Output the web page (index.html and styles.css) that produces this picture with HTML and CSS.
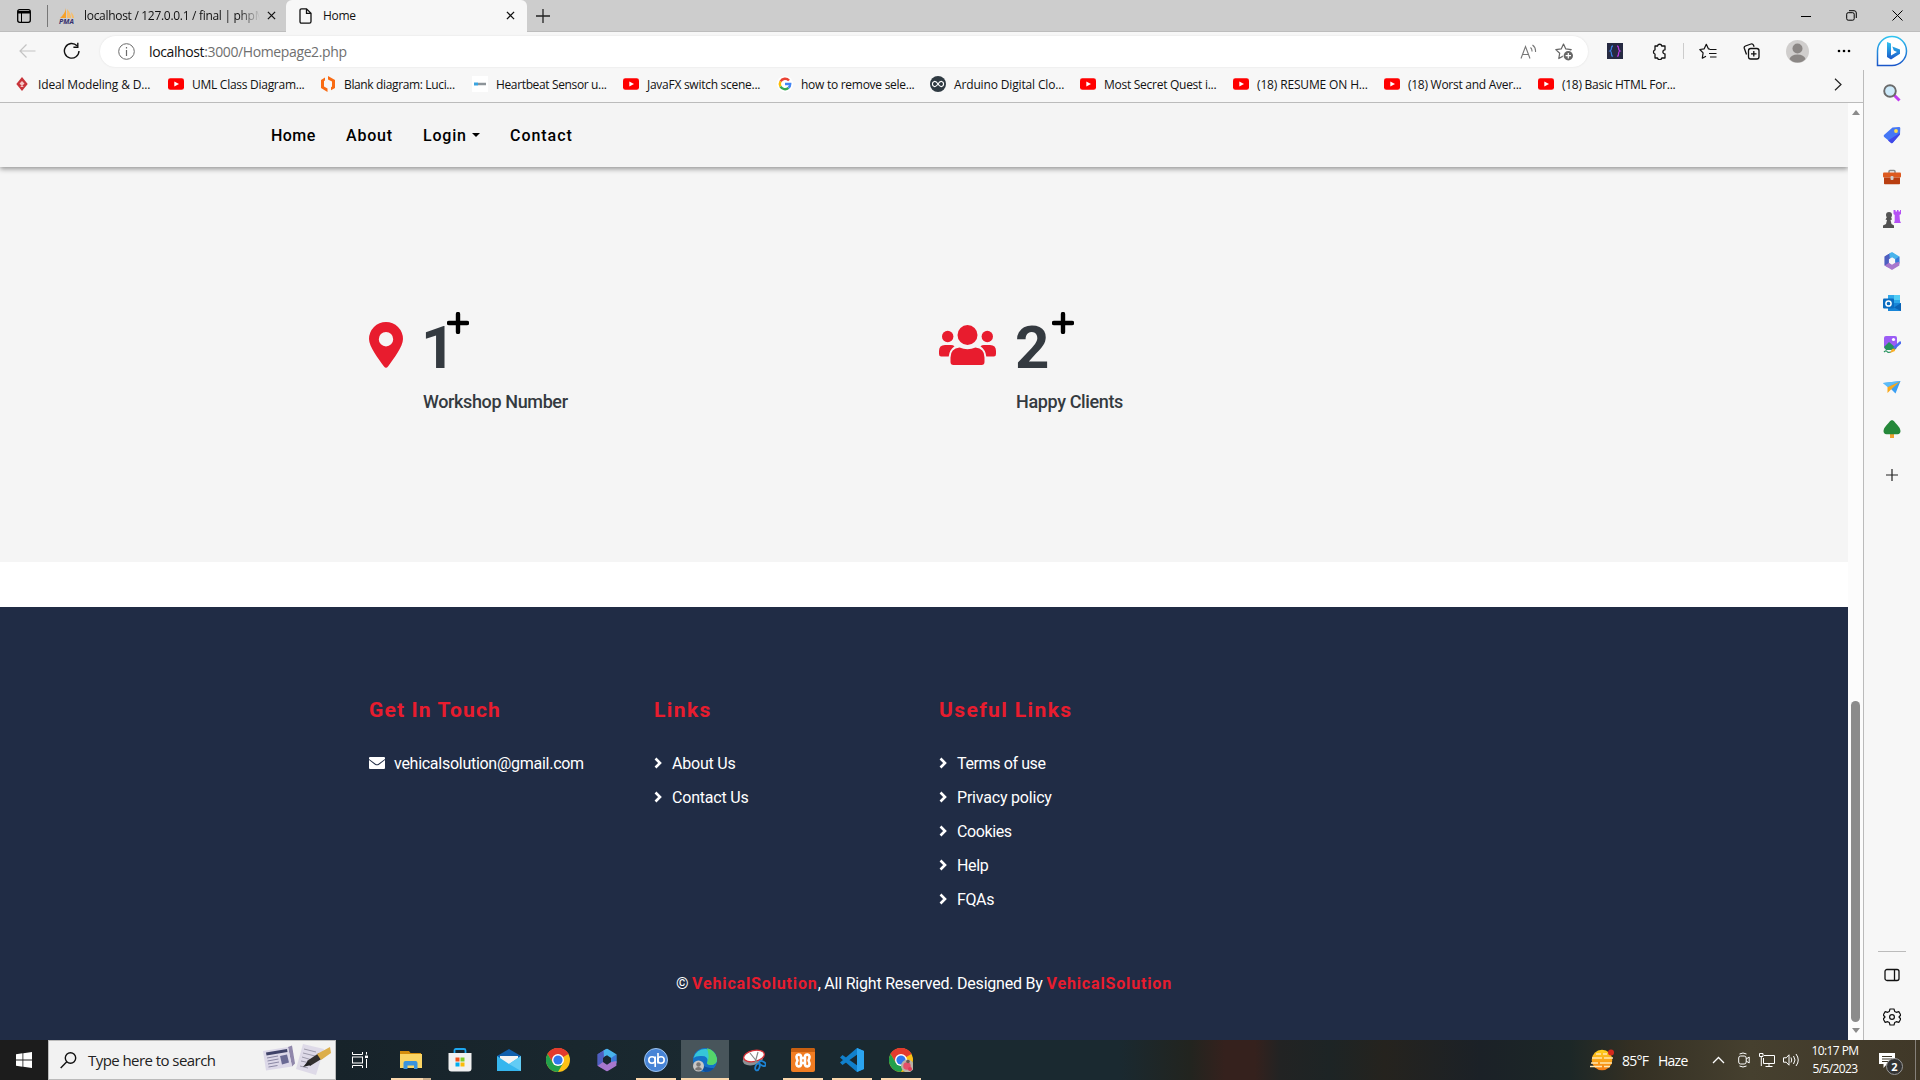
FILE: index.html
```html
<!DOCTYPE html>
<html lang="en">
<head>
<meta charset="utf-8">
<title>Home</title>
<link rel="stylesheet" href="styles.css">
</head>
<body>
<svg class="defs" width="0" height="0">
  <defs>
    <symbol id="yt" viewBox="0 0 16 16"><rect y="2.2" width="16" height="11.6" rx="2.4" fill="#f00"/><path d="M6.3 5.4v5.2L11 8z" fill="#fff"/></symbol>
    <symbol id="m365" viewBox="0 0 20 22"><path d="M1 5.500 8.500.8 13 3.500 8 7.500 6 9v4l2 3-2.500 3L1 16.500z" fill="#6a63c8"/><path d="M10 0l9 5.500V14l-5-1V9l-4-2.500L7 8 6.500 2.200z" fill="#48b4ec"/><path d="M14 9l5-3.500V14l-5-1z" fill="#3b77d8"/><path d="M19 12v4.500L10 22l-9-5.500L6 13l4 2.500 4-2.500z" fill="#a777cd"/><path d="M1 5.500 6.500 2.200 7 8 6 9v4l-5 3.500z" fill="#4d5fc0"/></symbol>
    <symbol id="chrome" viewBox="0 0 24 24"><circle cx="12" cy="12" r="12" fill="#fbc116"/><path d="M12 12 1.600 6A12 12 0 0 1 22.400 6z" fill="#e33b2e"/><path d="M12 6h10.400A12 12 0 0 0 1.600 6L7 15z" fill="#e33b2e"/><path d="M1.600 6a12 12 0 0 0 10.400 18l5.200-9L12 17.500 7 15z" fill="#22a04c"/><circle cx="12" cy="12" r="6" fill="#fff"/><circle cx="12" cy="12" r="4.600" fill="#2f78ee"/></symbol>
    <symbol id="chev" viewBox="0 0 8 12"><path d="M1.500 1.500 6 6l-4.500 4.500" fill="none" stroke="#fff" stroke-width="2.600"/></symbol>
    <symbol id="plus" viewBox="0 0 22 22"><path d="M11 2v18M2 11h18" stroke="#000" stroke-width="4.400" stroke-linecap="round"/></symbol>
    <symbol id="x" viewBox="0 0 10 10"><path d="m1 1 8 8M9 1 1 9" stroke="#111" stroke-width="1.400"/></symbol>
  </defs>
</svg>
<div class="desktop">
  <header class="tabstrip">
    <svg class="tab-actions" width="16" height="16" viewBox="0 0 16 16"><rect x="1.700" y="1.700" width="12.600" height="12.600" rx="2" fill="none" stroke="#000" stroke-width="1.300"/><path d="M2 3h12v2.500H2z"/><path d="M5.500 5v9" stroke="#000"/></svg>
    <div class="tab">
      <svg width="18" height="16" viewBox="0 0 18 16"><path d="M8 0v10H2C5 7 7 5 8 0z" fill="#f6a12a"/><path d="M9 1c3 3 4 6 4 9H9zM13 4c2 2 3 4 3 6h-2z" fill="#f8bd68"/><text x="1" y="15.500" class="pma">PMA</text></svg>
      <span class="tab-title fade">localhost / 127.0.0.1 / final | phpM</span>
      <svg width="9" height="9"><use href="#x"/></svg>
    </div>
    <div class="tab active">
      <svg width="13" height="16" viewBox="0 0 13 16"><path d="M1 2.500Q1 .8 2.600.8H7.500L12 5.300V13.500Q12 15.200 10.400 15.200H2.600Q1 15.200 1 13.500zM7.500.8v4.500H12" fill="none" stroke="#111" stroke-width="1.300"/></svg>
      <span class="tab-title">Home</span>
      <svg width="9" height="9"><use href="#x"/></svg>
    </div>
    <svg class="new-tab" width="14" height="14" viewBox="0 0 14 14"><path d="M7 0v14M0 7h14" stroke="#222" stroke-width="1.300"/></svg>
    <div class="win-buttons">
      <svg width="10" height="12" viewBox="0 0 10 12"><path d="M0 6.500h10" stroke="#000"/></svg>
      <svg width="11" height="11" viewBox="0 0 11 11" fill="none" stroke="#000"><rect x=".7" y="2.700" width="7.500" height="7.500" rx="1.500"/><path d="M3 .7h5q2.300 0 2.300 2.300v5"/></svg>
      <svg width="11" height="11" viewBox="0 0 11 11"><path d="m.5.5 10 10m0-10-10 10" stroke="#000"/></svg>
    </div>
  </header>

  <div class="toolbar">
    <svg class="back" width="17" height="14" viewBox="0 0 17 14"><path d="M16.500 7H1m6.500-6.500L1 7l6.500 6.500" fill="none" stroke="#c3c3c3" stroke-width="1.200"/></svg>
    <svg class="reload" width="18" height="18" viewBox="0 0 18 18"><path d="M16 9a7.300 7.300 0 1 1-2-5.200M14.800.8v4.400h-4.400" fill="none" stroke="#111" stroke-width="1.400"/></svg>
    <div class="address">
      <svg width="17" height="17" viewBox="0 0 17 17"><circle cx="8.500" cy="8.500" r="7.800" fill="none" stroke="#6b6b6b"/><path d="M8.500 7v6M8.500 4v1.500" stroke="#6b6b6b" stroke-width="1.200"/></svg>
      <span class="url">localhost<i>:3000/Homepage2.php</i></span>
      <svg class="read" width="17" height="16" viewBox="0 0 17 16" fill="none" stroke="#777" stroke-width="1.100"><path d="m1 14.500 4.500-12 4.500 12M2.500 10.500h6M10.500 3.500q1.700 1.500 1.500 4M12.500 1q3.500 2.500 3 7"/></svg>
      <svg width="19" height="18" viewBox="0 0 19 18"><path d="m8.500 1 2.300 4.900 5.400.7-4 3.800-3.700 2.500-4.700 2.600.9-5.300L.8 6.600l5.400-.7z" fill="none" stroke="#666" stroke-width="1.200" stroke-linejoin="round"/><circle cx="13.300" cy="12.700" r="5.600" fill="#fff"/><circle cx="13.300" cy="12.700" r="4.700" fill="#666"/><path d="M13.300 10v5.400M10.600 12.700h5.400" stroke="#fff" stroke-width="1.200"/></svg>
    </div>
    <svg class="ext" width="16" height="16" viewBox="0 0 16 16"><path d="M0 0h16v16H0z" fill="#262a42"/><path d="M6 3Q4.500 3 4.500 5T3 8q1.500.5 1.500 3T6 13" fill="none" stroke="#3c7fe0" stroke-width="1.300"/><path d="M10 3q1.500 0 1.500 2T13 8q-1.500.5-1.500 3T10 13" fill="none" stroke="#b53be0" stroke-width="1.300"/></svg>
    <svg class="puzzle" width="17" height="17" viewBox="0 0 17 17"><path d="M4 3h2.500a2.200 2.200 0 0 1 4.300 0H14v3.800a2 2 0 0 0 0 4.200v4h-3.200a2.200 2.200 0 0 1-4.300 0H4v-4a2.200 2.200 0 0 1 0-4.200z" fill="none" stroke="#111" stroke-width="1.300" stroke-linejoin="round"/></svg>
    <span class="tb-rule"></span>
    <svg class="favs" width="18" height="17" viewBox="0 0 18 17" fill="none" stroke="#111" stroke-width="1.200"><path d="M11 6 9.500 6 7.300 1.300 5.200 5.800.8 6.500l3.300 3.400-.8 5.300L7 13.200M10.500 6.500h7M10 10.500h7.500M11 14h6.500" stroke-linejoin="round"/></svg>
    <svg class="coll" width="17" height="17" viewBox="0 0 17 17" fill="none" stroke="#111" stroke-width="1.300"><path d="M3.500 11.500 1.300 5.200Q.8 3.600 2.400 3L8 1q1.700-.5 2.400 1l.7 1.800"/><rect x="5.500" y="5.500" width="10.500" height="10.500" rx="2.200"/><path d="M10.800 8v5.500M8 10.800h5.500"/></svg>
    <svg class="user" width="23" height="23" viewBox="0 0 23 23"><circle cx="11.500" cy="11.500" r="11.500" fill="#d0cecd"/><circle cx="11.500" cy="8.500" r="5" fill="#8b8785"/><path d="M3.500 19q1.500-4.500 8-4.500t8 4.500q-3 3.500-8 3.500t-8-3.500z" fill="#8b8785"/></svg>
    <svg class="dots" width="14" height="4" viewBox="0 0 14 4"><circle cx="2" cy="2" r="1.300"/><circle cx="7" cy="2" r="1.300"/><circle cx="12" cy="2" r="1.300"/></svg>
    <svg class="bing" width="32" height="32" viewBox="0 0 32 32"><defs><linearGradient id="bg" x2="0" y2="1"><stop stop-color="#30c4f0"/><stop offset="1" stop-color="#1b57c9"/></linearGradient></defs><path d="M1.500 30.500V16A14.500 14.500 0 1 1 16 30.500z" fill="#fff" stroke="url(#bg)" stroke-width="1.500"/><path d="m11 7 4 1.500v12L21 17l-3.200-1.500-1.500-4L24 14.500v4.300L15 24.500 11 22z" fill="url(#bg)"/></svg>
  </div>

  <div class="body">
    <main class="left">
      <nav class="bookmarks">
        <a class="wide"><svg width="16" height="16" viewBox="0 0 16 16"><path d="m8 1 5.700 7L8 15 2.300 8z" fill="#c8343a"/><path d="m8 5 2.500 2.500L8 10 5.500 7.500zM6 11l2-1.500 2 1.500" fill="#f5c8c8"/></svg>Ideal Modeling &amp; D...</a>
        <a><svg width="16" height="16"><use href="#yt"/></svg>UML Class Diagram...</a>
        <a class="tight"><svg width="16" height="16" viewBox="0 0 16 16"><path d="M5 1.500 1 4v8l6.500 4v-3.500L4 10.500V5l1-.5zM8 0l7 4v8l-4 2.300v-3L12 10.500V5.500L8 3.500z" fill="#f96b13"/></svg>Blank diagram: Luci...</a>
        <a class="tight"><svg width="16" height="16" viewBox="0 0 16 16"><path d="M0 0h16v16H0z" fill="#fff"/><path d="M2 8h4" stroke="#3aa4e0" stroke-width="3"/><path d="M6 8h8" stroke="#8d9499" stroke-width="2.500"/></svg>Heartbeat Sensor u...</a>
        <a><svg width="16" height="16"><use href="#yt"/></svg>JavaFX switch scene...</a>
        <a><svg width="16" height="16" viewBox="0 0 16 16" fill="none" stroke-width="2.400"><circle cx="8" cy="8" r="8" fill="#fff"/><path d="M12 4.500A5.200 5.200 0 0 0 3.500 5.500" stroke="#ea4335"/><path d="M3.500 5.400a5.200 5.200 0 0 0 0 5.200" stroke="#fbbc05"/><path d="M3.500 10.600a5.200 5.200 0 0 0 8 1.200" stroke="#34a853"/><path d="M11.500 11.800Q13.200 10.500 13.200 8H8" stroke="#4285f4"/></svg>how to remove sele...</a>
        <a class="wide"><svg width="16" height="16" viewBox="0 0 16 16"><circle cx="8" cy="8" r="8" fill="#2f3a42"/><path d="M8 8Q6 5 4.300 5.500a2.600 2.600 0 0 0 0 5Q6 11 8 8t3.700-2.500a2.600 2.600 0 0 1 0 5Q10 11 8 8" fill="none" stroke="#fff" stroke-width="1.200"/></svg>Arduino Digital Clo...</a>
        <a><svg width="16" height="16"><use href="#yt"/></svg>Most Secret Quest i...</a>
        <a class="wide"><svg width="16" height="16"><use href="#yt"/></svg>(18) RESUME ON H...</a>
        <a><svg width="16" height="16"><use href="#yt"/></svg>(18) Worst and Aver...</a>
        <a><svg width="16" height="16"><use href="#yt"/></svg>(18) Basic HTML For...</a>
        <svg class="more" width="8" height="13" viewBox="0 0 8 13"><path d="m1 .7 6 5.800-6 5.800" fill="none" stroke="#222" stroke-width="1.200"/></svg>
      </nav>
      <div class="viewport">
        <div class="page">
          <nav class="sitenav">
            <a>Home</a><a>About</a><a class="drop">Login</a><a>Contact</a>
          </nav>
          <section class="facts">
            <div class="fact">
              <svg width="34" height="46" viewBox="0 0 34 46"><path fill-rule="evenodd" d="M17 0a17 17 0 0 1 17 17c0 7.500-9.500 20-15 27.500q-2 2.500-4 0C9.500 37 0 24.500 0 17A17 17 0 0 1 17 0zm0 10a7.200 7.200 0 1 0 0 14.400A7.200 7.200 0 0 0 17 10z" fill="#e81c2e"/></svg>
              <div>
                <h3><span class="one">1</span><svg width="22" height="22"><use href="#plus"/></svg></h3>
                <p>Workshop Number</p>
              </div>
            </div>
            <div class="fact clients">
              <svg width="57" height="40" viewBox="0 0 57 40" fill="#e81c2e"><circle cx="28.500" cy="10" r="10"/><circle cx="8.700" cy="11.500" r="5.700"/><circle cx="48.300" cy="11.500" r="5.700"/><path d="M20.500 22.500q8 3.500 16 0 9 .8 9 10V37q0 3-3 3h-28q-3 0-3-3v-4.500q0-9.200 9-10zM6 20h6q2 0 3.500 1.300-5 3.500-5.800 10.200H2.200Q0 31.500 0 29v-3q0-6 6-6zM51 20h-6q-2 0-3.500 1.300 5 3.500 5.800 10.200h7.500q2.200 0 2.200-2.500v-3q0-6-6-6z"/></svg>
              <div>
                <h3><span class="two">2</span><svg width="22" height="22"><use href="#plus"/></svg></h3>
                <p>Happy Clients</p>
              </div>
            </div>
          </section>
          <footer class="footer">
            <div class="cols">
              <div class="touch">
                <h4>Get In Touch</h4>
                <a class="mail"><svg width="16" height="12" viewBox="0 0 16 12"><path d="M1 0h14Q16 0 16 1v.9L9.500 6.800q-1.500 1-3 0L0 1.900V1Q0 0 1 0zM0 3.100l6 4.600q2 1.300 4 0l6-4.600V11q0 1-1 1H1q-1 0-1-1z" fill="#fff"/></svg>vehicalsolution@gmail.com</a>
              </div>
              <div>
                <h4>Links</h4>
                <a class="near"><svg width="8" height="12"><use href="#chev"/></svg>About Us</a>
                <a class="near"><svg width="8" height="12"><use href="#chev"/></svg>Contact Us</a>
              </div>
              <div>
                <h4>Useful Links</h4>
                <a><svg width="8" height="12"><use href="#chev"/></svg>Terms of use</a>
                <a class="near"><svg width="8" height="12"><use href="#chev"/></svg>Privacy policy</a>
                <a><svg width="8" height="12"><use href="#chev"/></svg>Cookies</a>
                <a><svg width="8" height="12"><use href="#chev"/></svg>Help</a>
                <a><svg width="8" height="12"><use href="#chev"/></svg>FQAs</a>
              </div>
            </div>
            <p class="copyright">© <b>VehicalSolution</b>, All Right Reserved. Designed By <b>VehicalSolution</b></p>
          </footer>
        </div>
        <div class="scrollbar"><i class="up"></i><i class="thumb"></i><i class="down"></i></div>
      </div>
    </main>
    <aside class="sidebar">
      <svg viewBox="0 0 18 18"><path d="m11 11 5.500 5.500" stroke="#c03bf0" stroke-width="3"/><circle cx="7" cy="7" r="5.800" fill="#cdeafa" stroke="#6a6a6a" stroke-width="1.900"/></svg>
      <svg viewBox="0 0 18 18"><path d="M9.500 1.500 16 1q1.300 0 1.300 1.300l-.3 6.200-7 8q-1 1-2 0L1.200 11Q.2 10 1 9z" fill="#4577f5"/><path d="m17 7-.3 1.700-7 8q-1 1-2 0L5 14.500z" fill="#4048e8"/><circle cx="13" cy="5" r="1.900" fill="#ffe14a"/></svg>
      <svg viewBox="0 0 18 18"><path d="M6 5V3.500Q6 2.500 7 2.500h4q1 0 1 1V5" fill="none" stroke="#8a8a8a" stroke-width="1.500"/><rect y="4.500" width="18" height="5" rx="1" fill="#dd5a20"/><path d="M1 9.500h16v6q0 .8-.8.8H1.800q-.8 0-.8-.8z" fill="#b93e11"/><rect x="7.500" y="8" width="3" height="4" rx="1" fill="#cfcfcf"/></svg>
      <svg viewBox="0 0 18 18"><path d="M10.500 0h2v1.500H14V0h1.500v1.500H17V0h1v4l-1.500 1 .5 6 1 2h-7l.7-2V5l-1.200-1z" fill="#b550f5"/><circle cx="6" cy="5" r="3" fill="#555"/><path d="M4 7h4l1 2.500-1.500.5 1 4 2.500 1.500V18H0v-2.500L3 14l1-4-1.500-.5z" fill="#515151"/></svg>
      <svg viewBox="0 0 20 22"><use href="#m365"/></svg>
      <svg viewBox="0 0 18 18"><path d="M5 1h12v8H5z" fill="#2fa8ea"/><path d="M11 1h6v5h-6z" fill="#52cdf5"/><path d="M5 9h13v8H5z" fill="#1785d8"/><path d="m18 9-7 4.500 7 3.500z" fill="#0b63b5"/><rect y="4.500" width="11" height="10" rx="1" fill="#0b6cc0"/><circle cx="5.500" cy="9.500" r="2.600" fill="none" stroke="#fff" stroke-width="1.500"/></svg>
      <svg viewBox="0 0 18 18"><rect x="1" width="13" height="13" rx="2" fill="#9b5cf5"/><circle cx="10.500" cy="3.500" r="1.600" fill="#fff"/><path d="m1 11 5-5 7 6-1 2H3z" fill="#25935e"/><path d="M1 16q2-2 3-.5T8 16" fill="none" stroke="#25935e" stroke-width="1.200"/><path d="m11 12 7-6" stroke="#4d6bf0" stroke-width="2.500"/><path d="m7 17 2-4 2.500-.5.5 2.500z" fill="#f9ad24"/></svg>
      <svg viewBox="0 0 18 18"><path d="m0 5 17.500-2-5 12.500-4-4z" fill="#3b9ff3"/><path d="m17 3.500-9 8-3.500 3.500V9z" fill="#f8a91e"/><path d="m0 5 17.500-2L4.500 9z" fill="#5cbcf8"/></svg>
      <svg viewBox="0 0 18 18"><path d="M7 13h4v5H7z" fill="#f0a230"/><path d="M9 0q2 .3 3.500 3Q17.500 8 17.500 11t-3 3.200h-11Q.5 14 .5 11t5-8Q7 .3 9 0z" fill="#25883a"/></svg>
      <svg class="add" viewBox="0 0 14 14"><path d="M7 1v12M1 7h12" stroke="#222" stroke-width="1.200"/></svg>
      <hr>
      <svg class="panel" viewBox="0 0 16 14" fill="none" stroke="#111" stroke-width="1.300"><rect x="1" y="1.500" width="14" height="11" rx="2"/><path d="M10.500 1.500v11"/></svg>
      <svg class="gear" viewBox="0 0 18 18" fill="none" stroke="#111" stroke-width="1.200" stroke-linejoin="round"><circle cx="9" cy="9" r="2.400"/><path d="M7 1h4l.7 2.400 1.600.9 2.500-.7 2 3.400-1.800 2 1.800 2-2 3.400-2.500-.7-1.600.9L11 17H7l-.7-2.400-1.600-.9-2.500.7-2-3.400L2 9 .2 7l2-3.400 2.500.7 1.600-.9z"/></svg>
    </aside>
  </div>

  <div class="taskbar">
    <svg class="start" width="16" height="16" viewBox="0 0 16 16" fill="#fff"><path d="m0 2.200 6.500-.9v6.300H0zM7.300 1.200 16 0v7.600H7.300zM0 8.400h6.500v6.300L0 13.800zM7.300 8.400H16V16l-8.700-1.200z"/></svg>
    <div class="search">
      <svg width="17" height="17" viewBox="0 0 17 17" fill="none" stroke="#111" stroke-width="1.400"><circle cx="10.500" cy="6" r="5.200"/><path d="M6.800 9.800.7 16"/></svg>
      <span>Type here to search</span>
      <svg class="papers" width="70" height="32" viewBox="0 0 70 32"><path d="m26 3 4-1.500 3 18-3 3z" fill="#9087ab"/><path d="m1 7 25-4 4 19.500-26 4z" fill="#dcd8e8"/><path d="m4 8.500 21-3.500.5 3-21 3.500z" fill="#3f4268"/><path d="m5 14 11-2m-10.500 5 11-2M6 20l11-2m-10.500 5 9-1.500" stroke="#8b88a5"/><path d="m18 12 7-1.500 2 8-7 2z" fill="#6a6a94"/><path d="m41 0 21 5-8 26-20-6z" fill="#dedae8"/><path d="m42 5 12 3m-13 1 12 3m-13 1 10 3m-11 1 9 2m-10 3 8 2" stroke="#9d9aab"/><path d="m45 17 12-8 4 5-13 8z" fill="#33302f"/><path d="m55 10 13-7 1 6-10 7z" fill="#dcae4a"/><path d="m41 23 5-6 3 4z" fill="#222"/></svg>
    </div>
    <svg class="taskview" width="16" height="16" viewBox="0 0 16 16" fill="none" stroke="#fff"><path d="M.5 0v2.500h10V0M.5 16v-2.500h10V16"/><rect x=".5" y="5" width="10" height="6"/><path d="M14.500 0v2.500M14.500 7v9"/><path d="M13 4.800h3" stroke-width="2.500"/></svg>
    <div class="apps">
      <div class="app open multi"><svg viewBox="0 0 24 24"><path d="M1 3h9l1.500 2H22v3H1z" fill="#d58e0c"/><path d="M1 6h22v14H1z" fill="#fbd564"/><path d="M4.500 21v-6q0-2 2-2h10q2 0 2 2v6H15v-3.500H8.500V21z" fill="#3b93dd"/></svg></div>
      <div class="app"><svg viewBox="0 0 24 24"><path d="M6.500 6V2.500Q6.500 1 8 1h8q1.500 0 1.500 1.500V6" fill="none" stroke="#1ea7ef" stroke-width="1.800"/><path d="M.5 5h23v15.500q0 3-3 3h-17q-3 0-3-3z" fill="#f1f1f1"/><path d="M7.500 9.500h4v4h-4z" fill="#f1511b"/><path d="M12.500 9.500h4v4h-4z" fill="#80cc28"/><path d="M7.500 14.500h4v4h-4z" fill="#00adef"/><path d="M12.500 14.500h4v4h-4z" fill="#fbbc09"/></svg></div>
      <div class="app"><svg viewBox="0 0 24 24"><path d="M0 8 12 1l12 7v6H0z" fill="#0f5fad"/><path d="M3 8h18v8H3z" fill="#f3f3f3"/><path d="m0 8 12 8L24 8v15H0z" fill="#36b6ee"/><path d="m24 8-12 8 12 7z" fill="#62ccf5"/></svg></div>
      <div class="app"><svg viewBox="0 0 24 24"><use href="#chrome"/></svg></div>
      <div class="app"><svg viewBox="-1 -.5 22 23"><use href="#m365" width="20" height="22"/></svg></div>
      <div class="app open"><svg viewBox="0 0 24 24"><circle cx="12" cy="12" r="11.500" fill="#4784d6" stroke="#9fc4ee"/><g fill="none" stroke="#fff" stroke-width="1.600"><circle cx="8" cy="12" r="3.200"/><path d="M11.200 8.500V19M14 5v10.500"/><circle cx="17" cy="12" r="3.200"/></g></svg></div>
      <div class="app open current"><svg viewBox="0 0 24 24"><circle cx="12" cy="12" r="12" fill="#1572c8"/><path d="M.5 10A12 12 0 0 1 24 11q0 6-7 6-4-.5-2.500-3.500Q15 8 9 8 3 7.500.5 10z" fill="#36c6d8"/><path d="M14 .2A12 12 0 0 1 24 11q0 6-7 6-4-.5-2.500-3.500Q17 9 14 .2z" fill="#55d56a"/><path d="M9 12q-2 8 12 8-3 4-9 4-6-3-3-12z" fill="#0c4fa0"/><circle cx="5.500" cy="18" r="5.500" fill="#c9c7c5"/><circle cx="5.500" cy="16.500" r="2.200" fill="#7a7775"/><path d="M2 21.500q.5-2.500 3.500-2.500T9 21.500q-3.500 2-7 0z" fill="#7a7775"/></svg></div>
      <div class="app"><svg viewBox="0 0 24 24"><ellipse cx="11" cy="11" rx="10.500" ry="6" fill="#8c9296" transform="rotate(-15 11 11)"/><ellipse cx="12" cy="8" rx="10.500" ry="5.500" fill="#fff" stroke="#d8343b" stroke-width="1.300" transform="rotate(-12 12 8)"/><path d="m8 5 8 10M16 4l-3 11" stroke="#888" stroke-width="1.200"/><g fill="none" stroke="#1d83d4" stroke-width="1.800"><ellipse cx="15.500" cy="19" rx="2" ry="3.500" transform="rotate(20 15.500 19)"/><ellipse cx="20.500" cy="15.500" rx="3.500" ry="2" transform="rotate(30 20.500 15.500)"/></g></svg></div>
      <div class="app open"><svg viewBox="0 0 24 24"><rect width="24" height="24" rx="2" fill="#f27d22"/><path d="M0 2q0-2 2-2h20q2 0 2 2v2H0z" fill="#c85f10"/><path d="M7.500 6.500Q4 7.500 6.500 12.500 4 17.500 7.500 18.500q3 0 2.500-3.500h4q-.5 3.500 2.500 3.500 3.500-1 1-6 2.500-5-1-6-3 0-2.500 3.500h-4q.5-3.500-2.500-3.500zM10 10v5m4-5v5" fill="none" stroke="#fff" stroke-width="2.600" stroke-linejoin="round"/></svg></div>
      <div class="app open"><svg viewBox="0 0 24 24"><path d="m17 0 7 3v18l-7 3L0 9.500 2.500 7 18 18V6L2.500 17 0 14.500z" fill="#1180cc"/><path d="m17 0 7 3v18l-7 3z" fill="#2ba4f0"/></svg></div>
      <div class="app open"><svg viewBox="0 0 24 24"><use href="#chrome"/><circle cx="18.500" cy="18" r="6.500" fill="#b9b3a5"/><circle cx="18" cy="18" r="3.800" fill="#e5506a"/><circle cx="19" cy="13.500" r="1.800" fill="#6a5a50"/><circle cx="21" cy="21" r="2" fill="#e03c58"/></svg></div>
    </div>
    <div class="tray">
      <svg class="weather" width="25" height="22" viewBox="0 0 25 22"><defs><linearGradient id="sun" x2="0" y2="1"><stop stop-color="#ffd21c"/><stop offset="1" stop-color="#f47c18"/></linearGradient></defs><circle cx="12" cy="11" r="10.300" fill="url(#sun)"/><path d="M6 5h5M13 5h4M2 9h10m2 0h9M1 14h7m2 0h12M0 17.500h12m2 0h6" stroke="#ffe6b0" stroke-width="1.500"/><circle cx="21" cy="3.500" r="3" fill="#d32a1e"/></svg>
      <span class="temp">85°F</span><span class="haze">Haze</span>
      <svg class="t1" width="13" height="8" viewBox="0 0 13 8"><path d="m1 7 5.500-5.500L12 7" fill="none" stroke="#fff" stroke-width="1.300"/></svg>
      <svg class="t2" width="12" height="16" viewBox="0 0 12 16" fill="none" stroke="#fff"><rect x=".7" y="4" width="7.500" height="8" rx="2"/><path d="m8.200 7 3-2v6l-3-2M1.500 2Q5 0 8.500 2M1.500 14q3.500 2 7 0"/></svg>
      <svg class="t3" width="16" height="14" viewBox="0 0 16 14" fill="none" stroke="#fff"><path d="M5 2.500h10.500v8h-11V5M10 10.500v3M6.500 13.500h7M.5.500H4v3H.5zM2.300 3.500V13"/></svg>
      <svg class="t4" width="17" height="14" viewBox="0 0 17 14" fill="none" stroke="#fff"><path d="M.5 4.800h2.700L6 1.800v10.400l-2.800-3H.5zM8 4.500q1.500 2.500 0 5M10.500 3q3 4 0 8M13 1q4.500 6 0 12"/></svg>
      <div class="clock"><span>10:17 PM</span><span>5/5/2023</span></div>
      <div class="notice"><svg width="16" height="15" viewBox="0 0 16 15"><path d="M0 0h16v11H8l-3.500 4v-4H0z" fill="#fff"/><path d="M3 3.500h10M3 6h10M3 8.500h7" stroke="#3c3628"/></svg><span>2</span></div>
      <i class="peek"></i>
    </div>
  </div>
</div>
</body>
</html>
```
FILE: styles.css
```css
* { box-sizing: border-box; }
body { margin: 0; font-family: "Open Sans", "Noto Sans", sans-serif; font-size: 12px; color: #111; }
svg { display: block; flex: none; }
.defs { position: absolute; }
h3, h4, p { margin: 0; }
.desktop { width: 1920px; height: 1080px; display: flex; flex-direction: column; overflow: hidden; background: #f7f7f7; }

/* tabs */
.tabstrip { height: 32px; background: #cdcdcd; border-bottom: 1px solid #bdbdbd; display: flex; align-items: center; flex: none; }
.tab-actions { margin: 0 15px 0 16px; }
.tab { display: flex; align-items: center; height: 22px; width: 239px; border-left: 1px solid #777; padding: 0 10px; }
.tab-title { flex: 1; margin-left: 8px; letter-spacing: -.3px; white-space: nowrap; overflow: hidden; }
.fade { margin-right: 7px; -webkit-mask-image: linear-gradient(90deg, #000 88%, transparent); mask-image: linear-gradient(90deg, #000 88%, transparent); }
.tab.active { height: 32px; width: 241px; margin-bottom: -1px; background: #f7f7f7; border: 0; border-radius: 6px 6px 0 0; padding: 0 12px 1px 13px; }
.active .tab-title { margin-left: 11px; }
.pma { font: italic bold 7px "Open Sans", sans-serif; fill: #34316e; }
.new-tab { margin-left: 9px; }
.win-buttons { display: flex; gap: 35px; margin: 0 17px 0 auto; align-items: center; }

/* toolbar */
.toolbar { height: 38px; display: flex; align-items: center; flex: none; padding-left: 19px; }
.reload { margin: 0 19px 0 27px; }
.address { width: 1488px; height: 31px; margin-top: 1px; border-radius: 16px; background: #fff; display: flex; align-items: center; padding: 0 14px 0 18px; box-shadow: 0 0 2px #ddd; }
.url { flex: 1; margin: -1px 0 0 14px; font-size: 14px; letter-spacing: -.38px; }
.url i { font-style: normal; color: #6f6f6f; }
.read { margin-right: 18px; }
.ext { margin-left: 19px; }
.puzzle { margin-left: 28px; }
.tb-rule { width: 1px; height: 16px; background: #ccc; margin-left: 15px; }
.favs { margin-left: 15px; }
.coll { margin-left: 26px; }
.user { margin-left: 26px; }
.dots { margin-left: 28px; }
.bing { margin-left: 25px; }

.body { flex: 1; display: flex; min-height: 0; }
.left { width: 1863px; display: flex; flex-direction: column; flex: none; }

/* bookmarks */
.bookmarks { height: 33px; border-bottom: 1px solid #bbb; display: grid; grid-template-columns: 154px 152px 152px 151px 154px 153px 150px 153px 151px 154px 296px 10px; align-items: center; padding: 0 0 4px 14px; letter-spacing: -.27px; white-space: nowrap; }
.bookmarks a { display: flex; align-items: center; gap: 8px; }
.bookmarks .wide { letter-spacing: -.15px; }
.bookmarks .tight { letter-spacing: -.36px; }

/* site */
.viewport { flex: 1; display: flex; min-height: 0; }
.page { width: 1848px; background: #fff; display: flex; flex-direction: column; font-family: Roboto, sans-serif; font-size: 16px; }
.sitenav { height: 64px; display: flex; align-items: center; padding-left: 271px; background: #f4f4f4; box-shadow: 0 2px 5px rgba(0,0,0,.4); z-index: 1; font-weight: 500; letter-spacing: .8px; color: #000; clip-path: inset(0 0 -9px 0); }
.sitenav a { width: 75px; }
.sitenav a:first-child { letter-spacing: .45px; }
.sitenav a:nth-child(2) { width: 77px; }
.sitenav a:nth-child(3) { width: 87px; }
.sitenav a:last-child { letter-spacing: .95px; }
.sitenav .drop { display: flex; align-items: center; gap: 5px; }
.drop::after { content: ""; border: 4px solid transparent; border-top-color: #000; border-bottom: 0; }
.facts { height: 395px; display: flex; background: #f5f5f5; padding: 143px 0 0 369px; }
.fact { display: flex; gap: 20px; width: 570px; }
.fact > svg { margin-top: 12px; }
.fact.clients > svg { margin-top: 15px; }
.fact h3 { display: flex; align-items: flex-start; height: 72px; font: 700 60px/76px Roboto, sans-serif; color: #343a40; }
.fact h3 svg { margin-top: 2px; }
.one { width: 24px; text-indent: -2px; }
.two { width: 36px; text-indent: -1px; }
.fact p { font-size: 18px; line-height: 22px; font-weight: 500; letter-spacing: -.37px; color: #343a40; margin-top: 9px; }
.footer { margin-top: 45px; flex: 1; background: #202c45; color: #fff; padding: 90px 0 0 369px; display: flex; flex-direction: column; }
.cols { display: grid; grid-template-columns: 285px 285px 285px; height: 276px; align-content: start; letter-spacing: -.38px; }
h4 { font-size: 21px; line-height: 26px; letter-spacing: 1.4px; color: #e81c2e; margin-bottom: 23px; }
.touch h4 { letter-spacing: 1.15px; }
.cols a { display: flex; align-items: center; height: 34px; gap: 10px; }
.cols .near { letter-spacing: -.2px; }
.cols .mail { gap: 9px; letter-spacing: -.27px; }
.copyright { width: 1110px; text-align: center; line-height: 24px; margin-top: -1px; letter-spacing: -.21px; }
.copyright b { color: #e81c2e; letter-spacing: .85px; }

.scrollbar { width: 15px; background: #fcfcfc; display: flex; flex-direction: column; align-items: center; }
.scrollbar i { flex: none; }
.up { margin-top: 7px; border: 4px solid transparent; border-bottom: 5px solid #8b8b8b; border-top: 0; }
.thumb { width: 9px; height: 321px; border-radius: 5px; background: #8b8b8b; margin-top: 586px; }
.down { margin-top: 6px; border: 4px solid transparent; border-top: 5px solid #8b8b8b; border-bottom: 0; }

/* sidebar */
.sidebar { flex: 1; border-left: 1px solid #bbb; display: flex; flex-direction: column; align-items: center; gap: 24px; padding-top: 14px; }
.sidebar svg { width: 18px; height: 18px; }
.sidebar .add { width: 14px; height: 14px; margin-top: 6px; }
.sidebar hr { width: 28px; border: 0; border-top: 1px solid #bbb; margin: auto 0 -9px; }
.sidebar .panel { width: 16px; height: 14px; margin-top: 1px; }
.sidebar .gear { margin: 2px 0 14px; }

/* taskbar */
.taskbar { height: 40px; flex: none; display: flex; align-items: center; color: #fff; background: linear-gradient(90deg, #1c1c1c 0, #1c1c1c 48px, #17232a 336px, #1a2930 700px, #1a2930 1120px, #22241f 1190px, #35211d 1225px, #35211d 1255px, #222323 1280px, #1d2425 1330px, #25231e 1385px, #1b2127 1480px, #1c2727 1570px, #332f23 1630px, #46402f 1750px, #403828 1920px); }
.start { margin: 0 16px; }
.search { width: 288px; height: 40px; background: #f2f2f2; border: 1px solid #bbb; display: flex; align-items: center; padding-left: 11px; color: #222; }
.search span { font-size: 15px; letter-spacing: -.56px; margin-left: 11px; width: 174px; }
.taskview { margin: 0 23px 0 16px; }
.apps { display: flex; gap: 1px; margin-left: -4px; }
.app { width: 48px; height: 40px; display: flex; justify-content: center; align-items: center; }
.app svg { width: 24px; height: 24px; }
.open { background: linear-gradient(#fbd7ac, #fbd7ac) center bottom / 40px 2px no-repeat; }
.multi { background: linear-gradient(90deg, #fbd7ac 32px, #c9ac8a 32px) center bottom / 40px 2px no-repeat; }
.current { background: linear-gradient(#fbd7ac, #fbd7ac) center bottom / 48px 2px no-repeat #48555b; }
.tray { flex: 1; display: flex; align-items: center; justify-content: flex-end; height: 40px; }
.temp, .haze { font-size: 14px; letter-spacing: -.75px; }
.temp { margin-left: 7px; width: 36px; }
.haze { width: 54px; }
.t2 { margin-left: 13px; }
.t3 { margin-left: 9px; }
.t4 { margin-left: 8px; }
.clock { width: 70px; display: flex; flex-direction: column; align-items: center; line-height: 18px; letter-spacing: -.6px; }
.notice { position: relative; margin: 0 20px 0 9px; }
.notice span { position: absolute; left: 7px; top: 5px; width: 17px; height: 17px; border-radius: 50%; border: 1px solid #999; background: #333; font: 700 11px/15px "Open Sans", sans-serif; text-align: center; }
.peek { width: 1px; height: 40px; background: #85807a; margin-right: 4px; }
```
